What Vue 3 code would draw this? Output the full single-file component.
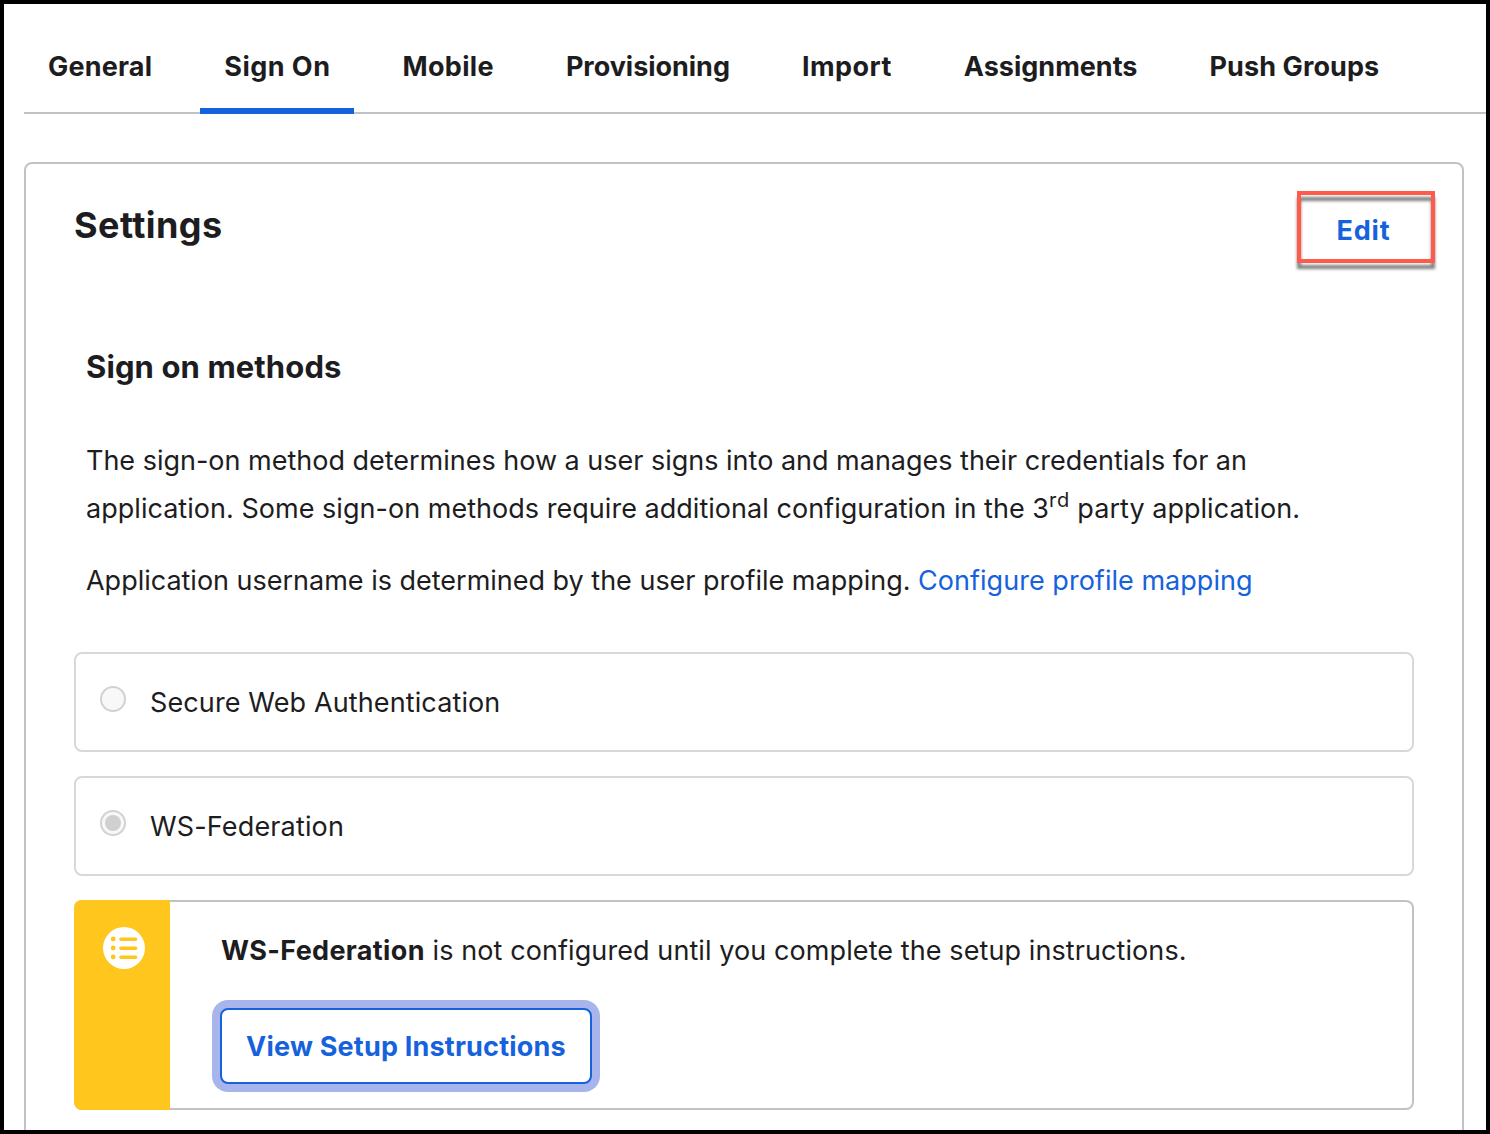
<script setup>
import { ref } from 'vue'

const tabs = [
  { label: 'General', spacing: 0.2 },
  { label: 'Sign On', spacing: 0.47 },
  { label: 'Mobile', spacing: 0.33 },
  { label: 'Provisioning', spacing: -0.03 },
  { label: 'Import', spacing: 0.45 },
  { label: 'Assignments', spacing: 0 },
  { label: 'Push Groups', spacing: 0.1 },
]
const activeTab = ref('Sign On')

const methods = [
  { label: 'Secure Web Authentication', spacing: 0.12 },
  { label: 'WS-Federation', spacing: 0.15 },
]
const selectedMethod = 'WS-Federation'
</script>

<template>
  <main class="frame">
    <nav class="tabs">
      <button
        v-for="tab in tabs"
        :key="tab.label"
        class="tab"
        :class="{ active: tab.label === activeTab }"
        :style="{ letterSpacing: tab.spacing + 'px' }"
        @click="activeTab = tab.label"
      >{{ tab.label }}</button>
    </nav>

    <section class="card">
      <header class="card-header">
        <h1>Settings</h1>
        <button class="edit">Edit</button>
      </header>

      <div class="intro">
        <h2>Sign on methods</h2>
        <p>
          <span class="line">The sign-on method determines how a user signs into and manages their credentials for an</span>
          <span class="line second">application. Some sign-on methods require additional configuration in the 3<sup>rd</sup> party application.</span>
        </p>
        <p class="line">Application username is determined by the user profile mapping. <a class="link">Configure profile mapping</a></p>
      </div>

      <div class="methods">
        <label v-for="method in methods" :key="method.label" class="method">
          <span class="radio" :class="{ checked: method.label === selectedMethod }"></span>
          <span class="method-label" :style="{ letterSpacing: method.spacing + 'px' }">{{ method.label }}</span>
        </label>

        <div class="notice">
          <div class="notice-side">
            <svg width="42" height="42" viewBox="0 0 42 42">
              <circle cx="21" cy="21" r="21" fill="#fff" />
              <g fill="#ffc61e">
                <circle cx="10.2" cy="12" r="2.4" />
                <circle cx="10.2" cy="21" r="2.4" />
                <circle cx="10.2" cy="30" r="2.4" />
              </g>
              <path d="M18 12.2H32.6M18 21.2H32.6M18 30.2H32.6" stroke="#ffc61e" stroke-width="3.6" stroke-linecap="round" />
            </svg>
          </div>
          <div class="notice-body">
            <p><strong>WS-Federation</strong> is not configured until you complete the setup instructions.</p>
            <button class="setup">View Setup Instructions</button>
          </div>
        </div>
      </div>
    </section>
  </main>
</template>

<style>
body {
  margin: 0;
  background: #fff;
}
</style>

<style scoped>
* {
  box-sizing: border-box;
}

.frame {
  height: 1134px;
  border: 4px solid #000;
  padding-left: 20px;
  overflow: hidden;
  background: #fff;
  color: #1d1d21;
  font: 400 27px/48px Inter, sans-serif;
}

h1,
h2,
p {
  margin: 0;
}

button {
  margin: 0;
  padding: 0;
  border: 0;
  background: none;
  color: inherit;
  font: inherit;
  font-weight: 700;
}

.tabs {
  display: flex;
  gap: 24px;
  height: 110px;
  box-shadow: inset 0 -2px #c1c1c8;
}

.tab {
  padding: 21px 24px 0;
  border-bottom: 6px solid transparent;
  white-space: nowrap;
}

.tab.active {
  border-bottom-color: #1662dd;
}

.card {
  width: 1440px;
  height: 1100px;
  margin-top: 48px;
  border: 2px solid #c1c1c8;
  border-radius: 8px;
  padding: 27px 27px 0 48px;
}

.card-header {
  display: flex;
  justify-content: space-between;
  align-items: flex-start;
}

h1 {
  margin-top: 10px;
  font-size: 36px;
  line-height: 48px;
  font-weight: 700;
  letter-spacing: 0.43px;
}

.edit {
  position: relative;
  width: 138px;
  height: 72px;
  padding: 7px 5px 0 0;
  color: #1662dd;
  letter-spacing: 0.9px;
}

.edit::before {
  content: "";
  position: absolute;
  inset: 0;
  border: 4px solid #ff5b4d;
  filter: drop-shadow(0 6px 1.5px rgba(0, 0, 0, 0.5));
}

.intro {
  padding: 80px 0 0 12px;
}

h2 {
  font-size: 31px;
  line-height: 48px;
  font-weight: 700;
  letter-spacing: 0.1px;
}

.intro p {
  margin-top: 46px;
}

.intro p + p {
  margin-top: 24px;
}

.line {
  display: block;
  white-space: nowrap;
  letter-spacing: -0.01px;
}

.second {
  letter-spacing: 0.03px;
}

sup {
  position: relative;
  top: -11px;
  vertical-align: baseline;
  font-size: 20px;
  line-height: 0;
  letter-spacing: 0.6px;
}

.link {
  color: #1662dd;
  letter-spacing: 0.03px;
}

.methods {
  display: flex;
  flex-direction: column;
  gap: 24px;
  width: 1340px;
  margin-top: 47px;
}

.method {
  display: flex;
  align-items: center;
  gap: 24px;
  height: 100px;
  border: 2px solid #d7d7dc;
  border-radius: 8px;
  padding-left: 24px;
}

.method-label {
  padding-top: 2px;
}

.radio {
  display: grid;
  place-items: center;
  width: 26px;
  height: 26px;
  margin-bottom: 6px;
  border: 2px solid #d2d2d2;
  border-radius: 50%;
  background: #f8f8f8;
}

.radio.checked::after {
  content: "";
  width: 16px;
  height: 16px;
  border-radius: 50%;
  background: #d0d0d0;
}

.notice {
  display: flex;
  height: 210px;
  border: 2px solid #c1c1c8;
  border-left: 0;
  border-radius: 8px;
}

.notice-side {
  flex: none;
  width: 96px;
  margin: -2px 0;
  border-radius: 8px 0 0 8px;
  padding: 27px 0 0 29px;
  background: #ffc61e;
  line-height: 0;
}

.notice-body {
  padding: 25px 0 0 50px;
}

.notice-body p {
  padding-left: 1px;
  white-space: nowrap;
  letter-spacing: 0.09px;
}

strong {
  font-weight: 700;
  letter-spacing: 0.35px;
}

.setup {
  display: block;
  width: 372px;
  height: 76px;
  margin-top: 33px;
  border: 2px solid #1662dd;
  border-radius: 8px;
  padding-top: 2px;
  background: #fff;
  box-shadow: 0 0 0 8px #a7b5ec;
  color: #1662dd;
  letter-spacing: 0.2px;
}
</style>
